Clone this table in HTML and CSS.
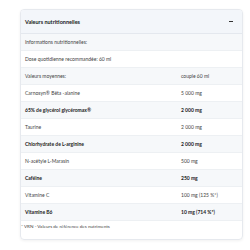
FILE: index.html
```html
<!DOCTYPE html>
<html lang="fr">
<head>
    <meta charset="UTF-8">
    <title>Valeurs nutritionnelles</title>
    <link rel="stylesheet" href="styles.css">
</head>
<body>
    <div class="panel">
        <div class="panel-head">
            <span>Valeurs nutritionnelles</span>
            <span class="toggle"></span>
        </div>
        <div class="panel-body">
            <table class="nutri">
                <tr class="odd"><td colspan="2">Informations nutritionnelles:</td></tr>
                <tr><td colspan="2">Dose quotidienne recommandée: 60 ml</td></tr>
                <tr class="odd"><td>Valeurs moyennes:</td><td>couple 60 ml</td></tr>
                <tr><td>Carnosyn® Bêta -alanine</td><td>5 000 mg</td></tr>
                <tr class="odd strong"><td>65% de glycérol glycéromax®</td><td>2 000 mg</td></tr>
                <tr><td>Taurine</td><td>2 000 mg</td></tr>
                <tr class="odd strong"><td>Chlorhydrate de L-arginine</td><td>2 000 mg</td></tr>
                <tr><td>N-acétyle L-Marasin</td><td>500 mg</td></tr>
                <tr class="odd strong"><td>Caféine</td><td>250 mg</td></tr>
                <tr><td>Vitamine C</td><td>100 mg (125 %*)</td></tr>
                <tr class="odd strong"><td>Vitamine B6</td><td>10 mg (714 %*)</td></tr>
            </table>
            <p class="note">* VRN - Valeurs de référence des nutriments</p>
        </div>
    </div>
</body>
</html>
```

FILE: styles.css
```css
body {
    margin: 0;
    padding: 9px 7px 14px 20px;
    background: #ffffff;
    font-family: Lato, "Liberation Sans", sans-serif;
    color: #444;
    font-size: 5px;
}
.panel {
    border: 1px solid #e6e9ee;
    border-radius: 4px;
    box-shadow: 0 1px 3px rgba(0, 0, 0, 0.06);
    overflow: hidden;
}
.panel-head {
    display: flex;
    justify-content: space-between;
    align-items: center;
    height: 23px;
    padding: 0 9px 0 4px;
    background: #f3f6fa;
    border-bottom: 1px solid #e4e8ee;
    font-weight: bold;
    font-size: 5.5px;
    color: #222;
}
.toggle {
    width: 4px;
    height: 1px;
    background: #333;
}
.panel-body {
    padding-bottom: 10px;
}
.nutri {
    width: 100%;
    border-collapse: collapse;
}
.nutri td {
    height: 16px;
    padding: 0 4px;
    border-bottom: 1px solid #edf0f3;
    white-space: nowrap;
}
.nutri td:first-child {
    width: 148px;
}
.nutri tr.odd td {
    background: #f6f8fa;
}
.nutri tr.strong td {
    font-weight: bold;
    color: #222;
}
.note {
    margin: 2px 0 0 0;
    font-size: 4.6px;
}
```
